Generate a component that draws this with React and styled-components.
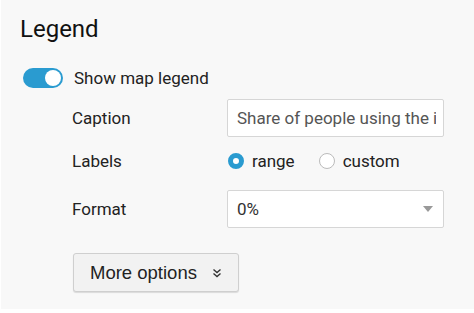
import styled, { createGlobalStyle } from "styled-components";

const GlobalStyle = createGlobalStyle`
    html, body {
        margin: 0;
        padding: 0;
        background: #ffffff;
        font-family: Roboto, "Liberation Sans", sans-serif;
    }
`;

function App() {
    return (
        <>
            <GlobalStyle />
            <Panel>
                <Heading>Legend</Heading>
                <ToggleRow>
                    <Toggle $on>
                        <span className="knob" />
                    </Toggle>
                    <span>Show map legend</span>
                </ToggleRow>
                <Indent>
                    <FormRow>
                        <Label>Caption</Label>
                        <TextInput readOnly value="Share of people using the internet" />
                    </FormRow>
                    <FormRow $mt={5}>
                        <Label>Labels</Label>
                        <RadioGroup>
                            <RadioItem>
                                <Radio $checked />
                                range
                            </RadioItem>
                            <RadioItem>
                                <Radio />
                                custom
                            </RadioItem>
                        </RadioGroup>
                    </FormRow>
                    <FormRow $mt={10}>
                        <Label>Format</Label>
                        <Select>
                            <span>0%</span>
                            <span className="caret" />
                        </Select>
                    </FormRow>
                    <MoreButton>
                        More options
                        <svg width="10" height="10" viewBox="0 0 10 10">
                            <polyline
                                points="1.5,1.5 5,4.5 8.5,1.5"
                                fill="none"
                                stroke="#333"
                                strokeWidth="1.4"
                            />
                            <polyline
                                points="1.5,5.5 5,8.5 8.5,5.5"
                                fill="none"
                                stroke="#333"
                                strokeWidth="1.4"
                            />
                        </svg>
                    </MoreButton>
                </Indent>
            </Panel>
        </>
    );
}

const Panel = styled.div`
    box-sizing: border-box;
    width: 473px;
    height: 309px;
    margin-left: 1px;
    background: #f8f8f8;
    padding: 15px 0 0 20px;
    color: #222;
`;

const Heading = styled.h2`
    margin: 0 0 0 -1px;
    font-size: 24px;
    line-height: 28px;
    font-weight: 400;
    color: #111;
`;

const ToggleRow = styled.div`
    display: flex;
    align-items: center;
    gap: 11px;
    margin-top: 25px;
    margin-left: 2px;
    font-size: 17px;
    color: #222;
`;

const Toggle = styled.span`
    position: relative;
    display: inline-block;
    width: 40px;
    height: 20px;
    border-radius: 10px;
    background: ${(p) => (p.$on ? "#2a9bd0" : "#ccc")};

    .knob {
        position: absolute;
        top: 2px;
        left: ${(p) => (p.$on ? "22px" : "2px")};
        width: 16px;
        height: 16px;
        border-radius: 50%;
        background: #fff;
    }
`;

const Indent = styled.div`
    margin-left: 51px;
    margin-top: 11px;
`;

const FormRow = styled.div`
    display: grid;
    grid-template-columns: 155px 217px;
    align-items: center;
    height: 38px;
    margin-top: ${(p) => p.$mt || 0}px;
`;

const Label = styled.span`
    font-size: 17px;
    color: #222;
`;

const TextInput = styled.input`
    box-sizing: border-box;
    width: 217px;
    height: 38px;
    border: 1px solid #d6d6d6;
    border-radius: 2px;
    background: #fff;
    padding: 0 7px 0 9px;
    font-family: Roboto, "Liberation Sans", sans-serif;
    font-size: 17px;
    color: #555;
    outline: none;
`;

const RadioGroup = styled.div`
    display: flex;
    align-items: center;
    gap: 24px;
    padding-left: 1px;
`;

const RadioItem = styled.label`
    display: flex;
    align-items: center;
    gap: 8px;
    font-size: 17px;
    color: #222;
`;

const Radio = styled.span`
    box-sizing: border-box;
    display: inline-block;
    width: 16px;
    height: 16px;
    border-radius: 50%;
    background: #fff;
    border: ${(p) => (p.$checked ? "5px solid #2a9bd0" : "1px solid #bbb")};
`;

const Select = styled.div`
    box-sizing: border-box;
    display: flex;
    align-items: center;
    justify-content: space-between;
    width: 217px;
    height: 38px;
    border: 1px solid #d6d6d6;
    border-radius: 2px;
    background: #fff;
    padding: 0 10px 0 9px;
    font-size: 17px;
    color: #333;

    .caret {
        width: 0;
        height: 0;
        border-left: 5px solid transparent;
        border-right: 5px solid transparent;
        border-top: 6px solid #999;
    }
`;

const MoreButton = styled.button`
    box-sizing: border-box;
    display: flex;
    align-items: center;
    gap: 15px;
    margin: 25px 0 0 1px;
    height: 39px;
    width: 166px;
    padding: 0 0 0 16px;
    border: 1px solid #cfcfcf;
    border-radius: 3px;
    background: #f2f2f2;
    box-shadow: 0 1px 1px rgba(0, 0, 0, 0.12);
    font-family: "Liberation Sans", Arial, sans-serif;
    font-size: 18.5px;
    color: #222;
`;

export default App;
